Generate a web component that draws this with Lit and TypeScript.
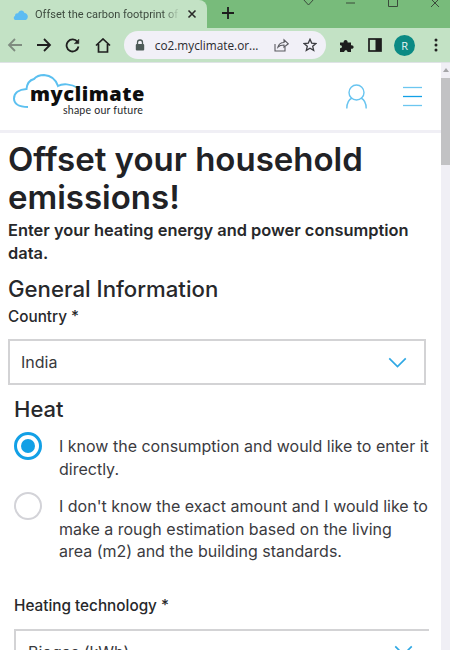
import { LitElement, html, css } from "lit";
import { customElement } from "lit/decorators.js";

const chevron = (w: number, h: number) => html`<svg width=${w} height=${h} viewBox="0 0 20 12" fill="none" stroke="#2fa8e4" stroke-width="1.8"><path d="M1 1.5 L10 10.5 L19 1.5" /></svg>`;

@customElement("browser-bar")
class BrowserBar extends LitElement {
  static styles = css`
    :host { display: block; }
    .strip { height: 28px; background: #78bb7b; display: flex; align-items: flex-start; }
    .tab { width: 207px; height: 28px; background: #c3e2c5; border-radius: 0 8px 0 0; display: flex; align-items: center; padding-left: 13px; box-sizing: border-box; flex: none; }
    .tab-title { width: 145px; margin-left: 7px; font: 11px Roboto, sans-serif; color: #3d4a3e; white-space: nowrap; overflow: hidden; -webkit-mask-image: linear-gradient(to right, #000 88%, transparent); mask-image: linear-gradient(to right, #000 88%, transparent); }
    .close { margin-left: 7px; display: flex; }
    .plus { margin-left: 15px; margin-top: 7px; display: flex; }
    .win { margin-left: 67px; display: flex; }
    .toolbar { height: 34px; background: #c3e2c5; display: flex; align-items: center; box-sizing: border-box; padding-left: 7px; }
    .btn { width: 29.2px; display: flex; flex: none; }
    .omni { width: 202px; height: 28px; border-radius: 14px; background: #f1f0f7; display: flex; align-items: center; padding-left: 11px; box-sizing: border-box; flex: none; }
    .url { font: 11.8px "Open Sans", sans-serif; color: #2a2a2e; margin-left: 10px; width: 119px; white-space: nowrap; flex: none; }
    .omni svg { flex: none; }
    .avatar { width: 21px; height: 21px; border-radius: 50%; background: #0b8a84; color: #e8f5f5; font: 11px "Open Sans", sans-serif; display: flex; align-items: center; justify-content: center; margin-left: 12px; }
    .right { display: flex; align-items: center; margin-left: 13.5px; }
    .gap14 { margin-left: 14px; }
    .gap19 { margin-left: 19px; }
    .line { height: 1px; background: #dfe3e6; }
  `;

  render() {
    return html`
      <div class="strip">
        <div class="tab">
          <svg width="15" height="11" viewBox="0 0 15 11"><path d="M3 11 C0.5 11 0 8 2 7 C2 4.5 4 4 5 4.5 C6 1 10 0 11.5 4 C14 4 15.5 7 14.5 9 C14 10.5 13 11 12 11 Z" fill="#5cbcf2" /></svg>
          <span class="tab-title">Offset the carbon footprint of your</span>
          <span class="close"><svg width="10" height="10" viewBox="0 0 10 10" stroke="#2a2a2a" stroke-width="1.6"><path d="M1.5 1.5 L8.5 8.5 M8.5 1.5 L1.5 8.5" /></svg></span>
        </div>
        <span class="plus"><svg width="12" height="12" viewBox="0 0 12 12" stroke="#1c1c1c" stroke-width="1.8"><path d="M6 0 V12 M0 6 H12" /></svg></span>
        <span class="win"><svg width="150" height="12" viewBox="0 0 150 12" fill="none" stroke="#3a4a3b" stroke-width="1"><path d="M2 -1 L7.5 5 L13 -1" /><path d="M45 3 H54" /><path d="M87.5 -2 H96.5 V6.5 H87.5 Z" /><path d="M130 -1 L138 7 M138 -1 L130 7" /></svg></span>
      </div>
      <div class="toolbar">
        <span class="btn"><svg width="16" height="14" viewBox="0 0 16 14" fill="none" stroke="#7f8c80" stroke-width="1.8"><path d="M15 7 H2 M8 1 L2 7 L8 13" /></svg></span>
        <span class="btn"><svg width="16" height="14" viewBox="0 0 16 14" fill="none" stroke="#1f1f1f" stroke-width="1.8"><path d="M1 7 H14 M8 1 L14 7 L8 13" /></svg></span>
        <span class="btn"><svg width="15" height="15" viewBox="0 0 15 15" fill="none" stroke="#1f1f1f" stroke-width="1.8"><path d="M12.5 4 A6 6 0 1 0 13.5 8.5" /><path d="M13.8 1 V5.6 H9.2" fill="#1f1f1f" stroke-width="0.6" /></svg></span>
        <span class="btn"><svg width="16" height="15" viewBox="0 0 16 15" fill="none" stroke="#1f1f1f" stroke-width="1.7"><path d="M1 7.5 L8 1 L15 7.5 M3.5 6 V14 H12.5 V6" /></svg></span>
        <div class="omni">
          <svg width="10" height="12" viewBox="0 0 10 12"><path d="M2.5 5 V3.5 A2.5 2.5 0 0 1 7.5 3.5 V5" fill="none" stroke="#4d5a58" stroke-width="1.3" /><rect x="0.8" y="5" width="8.4" height="6.6" rx="1" fill="#4d5a58" /></svg>
          <span class="url">co2.myclimate.or...</span>
          <svg width="15" height="14" viewBox="0 0 15 14" fill="none" stroke="#5a5a60" stroke-width="1.1"><path d="M1 6 V13 H11 V9" /><path d="M4 9 C5 5.5 7.5 4.5 10 4.5 V1.8 L14.3 5.8 L10 9.2 V7 C7.5 7 5.5 7.5 4 9 Z" /></svg>
          <svg class="gap14" width="14" height="14" viewBox="0 0 14 14" fill="none" stroke="#3a3a3f" stroke-width="1.3"><path d="M7 1.3 L8.7 5.1 L12.9 5.5 L9.7 8.3 L10.7 12.4 L7 10.2 L3.3 12.4 L4.3 8.3 L1.1 5.5 L5.3 5.1 Z" /></svg>
        </div>
        <div class="right">
          <svg width="15" height="15" viewBox="0 0 15 15" fill="#1d1d1d"><path d="M1 4.5 H4.6 C4.3 1 9 1 8.6 4.5 H12 V7.2 C15.5 6.8 15.5 11.2 12 10.8 V14 H8.5 C8.8 11.5 5 11.5 5.2 14 H1 V10.2 C3.6 10.4 3.6 7 1 7.3 Z" /></svg>
          <svg class="gap14" width="14" height="14" viewBox="0 0 14 14"><rect x="1" y="1" width="12" height="12" fill="none" stroke="#1d1d1d" stroke-width="1.7" /><rect x="7.5" y="1" width="5.5" height="12" fill="#1d1d1d" /></svg>
          <span class="avatar">R</span>
          <svg class="gap19" width="4" height="14" viewBox="0 0 4 14" fill="#222"><circle cx="2" cy="2" r="1.5" /><circle cx="2" cy="7" r="1.5" /><circle cx="2" cy="12" r="1.5" /></svg>
        </div>
      </div>
      <div class="line"></div>
    `;
  }
}

@customElement("app-root")
class AppRoot extends LitElement {
  static styles = css`
    :host { display: block; height: 650px; overflow: hidden; background: #fff; font-family: Inter, "Liberation Sans", sans-serif; color: #27282b; }
    .view { display: flex; height: 587px; overflow: hidden; }
    .page { width: 441px; flex: none; overflow: hidden; }
    .scroll { width: 9px; flex: none; background: #f0eff5; display: flex; flex-direction: column; align-items: center; }
    .scroll-arrow { margin-top: 5px; width: 0; height: 0; border-left: 3px solid transparent; border-right: 3px solid transparent; border-bottom: 4px solid #a5a5a8; }
    .thumb { margin-top: 6px; width: 9px; height: 87px; background: #c2c2c4; flex: none; }
    header { height: 67px; border-bottom: 3px solid #f0eff5; display: flex; align-items: center; padding-left: 13px; }
    .logo { display: grid; width: 131px; height: 42px; margin-top: -3px; }
    .logo > * { grid-area: 1 / 1; }
    .logo-text { padding-left: 17px; padding-top: 8px; font: 800 20px/24px "Open Sans", sans-serif; letter-spacing: 0.55px; color: #0e0e0e; white-space: nowrap; }
    .logo-sub { padding-left: 50px; padding-top: 30px; font: 400 10.6px/13px Lato, sans-serif; color: #26282a; letter-spacing: 0.2px; white-space: nowrap; }
    .head-icons { margin-left: auto; display: flex; align-items: center; gap: 36px; margin-right: 19px; }
    main { width: 429px; overflow: hidden; padding-top: 7px; }
    h1 { margin: 0 0 0 8px; font-size: 33px; line-height: 38px; font-weight: 600; color: #212226; }
    .lead { margin: 3px 0 0 8px; font-size: 16.4px; line-height: 23px; font-weight: 600; width: 415px; }
    h2 { margin: 10px 0 0 8px; font-size: 22.2px; line-height: 28px; font-weight: 500; }
    label { display: block; font-size: 15.3px; line-height: 22px; font-weight: 500; }
    .country { margin-left: 8px; margin-top: 3px; }
    .select { box-sizing: border-box; border: 2px solid #d3d3d5; height: 46px; display: flex; align-items: center; justify-content: space-between; padding: 0 17px 0 11px; font-size: 16px; background: #fff; color: #39393c; }
    .select.first { margin: 11px 3px 0 8px; }
    h3 { margin: 10px 0 0 14px; font-size: 22px; line-height: 28px; font-weight: 500; }
    .radio-row { display: flex; margin-left: 14px; white-space: nowrap; }
    .radio-row.one { margin-top: 9px; }
    .radio-row.two { margin-top: 12px; }
    .radio { box-sizing: border-box; width: 28px; height: 28px; border-radius: 50%; border: 2px solid #d3d3d8; flex: none; background: #fff; }
    .radio.on { border: 3px solid #12a0e6; padding: 4px; }
    .radio.on::after { content: ""; display: block; width: 14px; height: 14px; border-radius: 50%; background: #12a0e6; }
    .radio-text { margin-left: 17px; font-size: 16px; line-height: 22.5px; color: #3b3b3f; margin-top: 3px; }
    .tech { margin: 32px 0 0 14px; }
    .select.second { margin: 12px 0 0 14px; padding: 11px 16px 0 12px; border-right: 0; align-items: flex-start; }
    .select.second svg { margin-top: 3px; }
  `;

  render() {
    return html`
      <browser-bar></browser-bar>
      <div class="view">
        <div class="page">
          <header>
            <div class="logo">
              <svg width="80" height="42" viewBox="0 0 80 42" fill="none" stroke="#5cc0f0" stroke-width="2"><path d="M15 33 C5 33 1 29 1 24.5 C1 19 6 15.5 13.5 15 C14 10 17 6 21 5 C24 1.5 28 1 31 1 C38 1.5 43 6 45 12 C49 9.5 58 9.5 65 14" /></svg>
              <span class="logo-text">myclimate</span>
              <span class="logo-sub">shape our future</span>
            </div>
            <div class="head-icons">
              <svg width="21" height="25" viewBox="0 0 21 25" fill="none" stroke="#68c4f0" stroke-width="1.4"><circle cx="10.5" cy="8.5" r="7.5" /><path d="M0.8 24.5 C0.8 19 3 15.5 6 14 M20.2 24.5 C20.2 19 18 15.5 15 14" /></svg>
              <svg width="19" height="21" viewBox="0 0 19 21" fill="none" stroke-width="1.3"><path d="M0 1.5 H19" stroke="#6cc6f0" /><path d="M0 10.5 H19" stroke="#12a0e6" /><path d="M0 19.5 H19" stroke="#6cc6f0" /></svg>
            </div>
          </header>
          <main>
            <h1>Offset your household emissions!</h1>
            <p class="lead">Enter your heating energy and power consumption data.</p>
            <h2>General Information</h2>
            <label class="country">Country *</label>
            <div class="select first">India ${chevron(19, 11)}</div>
            <h3>Heat</h3>
            <div class="radio-row one">
              <span class="radio on"></span>
              <span class="radio-text">I know the consumption and would like to enter it<br />directly.</span>
            </div>
            <div class="radio-row two">
              <span class="radio"></span>
              <span class="radio-text">I don't know the exact amount and I would like to<br />make a rough estimation based on the living<br />area (m2) and the building standards.</span>
            </div>
            <label class="tech">Heating technology *</label>
            <div class="select second">Biogas (kWh) ${chevron(19, 11)}</div>
          </main>
        </div>
        <div class="scroll"><span class="scroll-arrow"></span><span class="thumb"></span></div>
      </div>
    `;
  }
}
